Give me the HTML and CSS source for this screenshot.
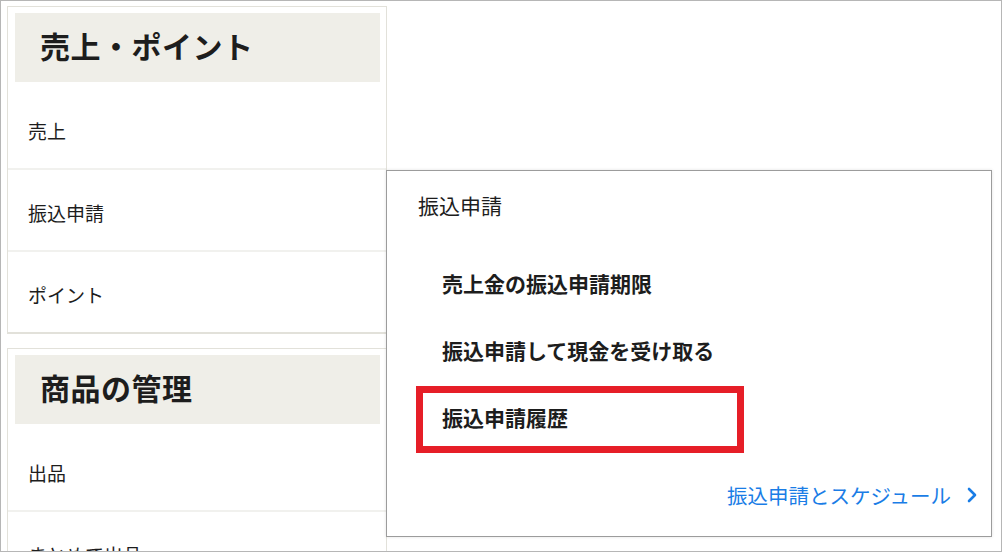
FILE: index.html
```html
<!DOCTYPE html>
<html lang="ja">

<head>
    <meta charset="UTF-8">
    <meta name="viewport" content="width=device-width, initial-scale=1.0">
    <title>売上・ポイント</title>
    <link rel="stylesheet" href="styles.css">
</head>

<body>
    <div class="frame">
        <nav class="sidebar">
            <section class="menu-card">
                <h2 class="menu-title">売上・ポイント</h2>
                <ul class="menu-list">
                    <li>売上</li>
                    <li>振込申請</li>
                    <li>ポイント</li>
                </ul>
            </section>
            <section class="menu-card">
                <h2 class="menu-title">商品の管理</h2>
                <ul class="menu-list">
                    <li>出品</li>
                    <li>まとめて出品</li>
                </ul>
            </section>
        </nav>

        <!-- 振込申請のサブメニュー -->
        <div class="submenu">
            <p class="submenu-title">振込申請</p>
            <ul class="submenu-list">
                <li>売上金の振込申請期限</li>
                <li>振込申請して現金を受け取る</li>
                <li class="highlight">振込申請履歴</li>
            </ul>
            <a class="submenu-link" href="#">振込申請とスケジュール
                <svg class="chevron" width="10" height="16" viewBox="0 0 10 16">
                    <polyline points="2,2 8,8 2,14" fill="none" stroke="currentColor" stroke-width="2.6" stroke-linecap="round" stroke-linejoin="round" />
                </svg>
            </a>
        </div>
    </div>
</body>

</html>
```

FILE: styles.css
```css
:root {
    --text-color: #1d1d1d;
    --card-border: #e2e1da;
    --title-background: #efeee8;
    --row-divider: #f1f1ee;
    --link-color: #1a7de6;
    --highlight: #e61e27;
}

body {
    margin: 0;
    padding: 0;
    font-family: "Noto Sans CJK JP", "Noto Sans", sans-serif;
    color: var(--text-color);
    background-color: #ffffff;
}

.frame {
    position: relative;
    box-sizing: border-box;
    height: 552px;
    border: 1px solid #b6b6b6;
    padding: 5px 0 0 6px;
    overflow: hidden;
}

.sidebar {
    display: flex;
    flex-direction: column;
    gap: 14px;
    width: 380px;
}

.menu-card {
    border: 1px solid var(--card-border);
    border-bottom-width: 2px;
}

.menu-title {
    display: flex;
    align-items: center;
    box-sizing: border-box;
    height: 69px;
    margin: 6px 6px 0 7px;
    padding: 0 0 5px 25px;
    background-color: var(--title-background);
    font-size: 30px;
    font-weight: 700;
    letter-spacing: 0.5px;
}

.menu-list {
    list-style: none;
    margin: 6px 0 0;
    padding: 0;
}

.menu-list li {
    display: flex;
    align-items: center;
    box-sizing: border-box;
    height: 82px;
    padding: 5px 0 0 20px;
    border-bottom: 2px solid var(--row-divider);
    font-size: 19px;
}

.menu-list li:last-child {
    border-bottom: none;
    height: 80px;
}

.submenu {
    position: absolute;
    left: 385px;
    top: 169px;
    box-sizing: border-box;
    width: 606px;
    height: 367px;
    padding: 19px 14px 0 31px;
    border: 1px solid #9c9c9c;
    background-color: #ffffff;
    box-shadow: 0 0 3px rgba(0, 0, 0, 0.12);
}

.submenu-title {
    margin: 0;
    font-size: 21px;
    line-height: 30px;
}

.submenu-list {
    list-style: none;
    margin: 32px 0 0 -2px;
    padding: 0;
}

.submenu-list li {
    display: flex;
    align-items: center;
    box-sizing: border-box;
    width: 328px;
    height: 67px;
    padding: 0 0 5px 19px;
    border: 7px solid transparent;
    font-size: 21px;
    font-weight: 700;
}

.submenu-list li.highlight {
    border-color: var(--highlight);
}

.submenu-link {
    display: flex;
    align-items: center;
    justify-content: flex-end;
    gap: 16px;
    margin-top: 27px;
    line-height: 30px;
    font-size: 20.5px;
    color: var(--link-color);
    text-decoration: none;
}
```
